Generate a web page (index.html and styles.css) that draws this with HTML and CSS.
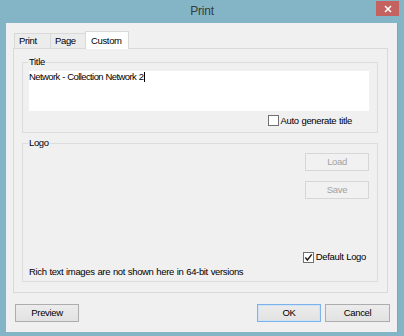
FILE: index.html
```html
<!DOCTYPE html>
<html>
<head>
<meta charset="utf-8">
<title>Print</title>
<link rel="stylesheet" href="styles.css">
</head>
<body>
<div class="window">
  <div class="titlebar">
    <span class="tb-left"></span>
    <span class="caption">Print</span>
    <span class="tb-right">
      <span class="close">
        <svg width="8" height="8" viewBox="0 0 8 8"><path d="M1 1L7 7M7 1L1 7" stroke="#fff" stroke-width="1.6" fill="none"/></svg>
      </span>
    </span>
  </div>
  <div class="client">
    <div class="tabs">
      <div class="tab tab-print">Print</div>
      <div class="tab tab-page">Page</div>
      <div class="tab tab-custom active">Custom</div>
    </div>
    <div class="panel">
      <fieldset class="group group-title">
        <legend>Title</legend>
        <div class="titlebox">Network - Collection Network 2<span class="caret"></span></div>
        <label class="check check-auto"><span class="box"></span>Auto generate title</label>
      </fieldset>
      <fieldset class="group group-logo">
        <legend>Logo</legend>
        <div class="logo-body">
          <div class="logo-buttons">
            <button class="btn btn-disabled" disabled>Load</button>
            <button class="btn btn-disabled" disabled>Save</button>
          </div>
          <label class="check check-default"><span class="box"><svg width="9" height="9" viewBox="0 0 9 9"><path d="M1.3 4.6L3.4 7L7.8 1.4" stroke="#222" stroke-width="1.5" fill="none"/></svg></span>Default Logo</label>
          <div class="note">Rich text images are not shown here in 64-bit versions</div>
        </div>
      </fieldset>
    </div>
    <div class="footer">
      <button class="btn btn-preview">Preview</button>
      <span class="spacer"></span>
      <button class="btn btn-ok">OK</button>
      <button class="btn btn-cancel">Cancel</button>
    </div>
  </div>
</div>
</body>
</html>
```

FILE: styles.css
```css
* { box-sizing: border-box; }
html, body { margin: 0; padding: 0; }
body {
  width: 404px;
  height: 336px;
  overflow: hidden;
  background: #84b5c7;
  font-family: "Liberation Sans", Arial, sans-serif;
  font-size: 9.5px;
  letter-spacing: -0.35px;
  word-spacing: 0.5px;
  color: #000;
}
.window {
  height: 336px;
  display: flex;
  flex-direction: column;
}
.titlebar {
  height: 23px;
  display: grid;
  grid-template-columns: 1fr auto 1fr;
  align-items: start;
}
.caption {
  font-size: 12px;
  letter-spacing: -0.2px;
  line-height: 23px;
  color: #3a3a3a;
}
.tb-right {
  justify-self: end;
  margin-right: 5px;
  margin-top: 1px;
}
.close {
  width: 23px;
  height: 15px;
  background: #c4625f;
  display: flex;
  align-items: center;
  justify-content: center;
}
.close svg { display: block; }
.client {
  flex: 1;
  margin: 0 6px 4px 6px;
  background: #f0f0f0;
  border-right: 1px solid #78a9bb;
  display: flex;
  flex-direction: column;
  padding: 8px 7px 10px 7px;
}
.tabs {
  height: 17px;
  display: flex;
  align-items: flex-end;
  padding-left: 1px;
  position: relative;
  z-index: 1;
}
.tab {
  height: 15px;
  line-height: 13px;
  border: 1px solid #d9d9d9;
  border-bottom: none;
  background: #ececec;
  padding-left: 4px;
  white-space: nowrap;
}
.tab-print { width: 37px; }
.tab-page { width: 36px; margin-left: -1px; }
.tab-custom { width: 44px; margin-left: -1px; }
.tab.active {
  height: 18px;
  margin-bottom: -1px;
  background: #fff;
  padding-top: 2px;
  padding-left: 5px;
}
.panel {
  height: 245px;
  margin-right: 2px;
  border: 1px solid #d9d9d9;
  background: #f0f0f0;
  padding: 7px 9px 10px 8px;
  display: flex;
  flex-direction: column;
}
.group {
  margin: 0;
  min-width: 0;
  border: 1px solid #dcdcdc;
  padding: 0 8px 0 6px;
}
.group legend {
  padding: 0 1px;
  margin-left: -1px;
  line-height: 12px;
}
.group-title {
  height: 77px;
  padding-top: 3px;
  display: flex;
  flex-direction: column;
}
.titlebox {
  height: 40px;
  background: #fff;
  line-height: 12px;
  letter-spacing: -0.6px;
  white-space: nowrap;
}
.caret {
  display: inline-block;
  width: 1px;
  height: 10px;
  background: #000;
  vertical-align: -2px;
  margin-left: 1px;
}
.check {
  display: flex;
  align-items: center;
  line-height: 12px;
  white-space: nowrap;
}
.box {
  width: 11px;
  height: 11px;
  border: 1px solid #707070;
  background: #fff;
  margin-right: 2px;
  display: flex;
  align-items: center;
  justify-content: center;
}
.box svg { display: block; }
.check-auto {
  align-self: flex-end;
  margin-top: 3px;
  margin-right: 17px;
  height: 13px;
}
.group-logo {
  height: 145px;
  margin-top: 4px;
  padding-top: 4px;
  padding-bottom: 3px;
}
.logo-body {
  height: 125px;
  display: flex;
  flex-direction: column;
}
.logo-buttons {
  align-self: flex-end;
  display: flex;
  flex-direction: column;
  gap: 10px;
}
.btn {
  font-family: "Liberation Sans", Arial, sans-serif;
  font-size: 9.5px;
  letter-spacing: -0.35px;
  width: 64px;
  height: 18px;
  padding: 0;
  margin: 0;
  border: 1px solid #adadad;
  background: linear-gradient(#ececec, #e2e2e2);
  color: #000;
  line-height: 16px;
}
.btn-disabled {
  border-color: #d6d6d6;
  background: #f1f1f1;
  color: #a2a2a2;
}
.check-default {
  align-self: flex-end;
  margin-top: auto;
  margin-right: 3px;
}
.note {
  margin-top: 3px;
  line-height: 12px;
  white-space: nowrap;
}
.footer {
  margin-top: 11px;
  height: 18px;
  display: flex;
  gap: 4px;
  padding-left: 2px;
}
.spacer { flex: 1; }
.btn-ok {
  border-color: #7db3e8;
  box-shadow: inset 0 0 0 1px #cfe3f7;
}
.btn-cancel { width: 65px; }
```
